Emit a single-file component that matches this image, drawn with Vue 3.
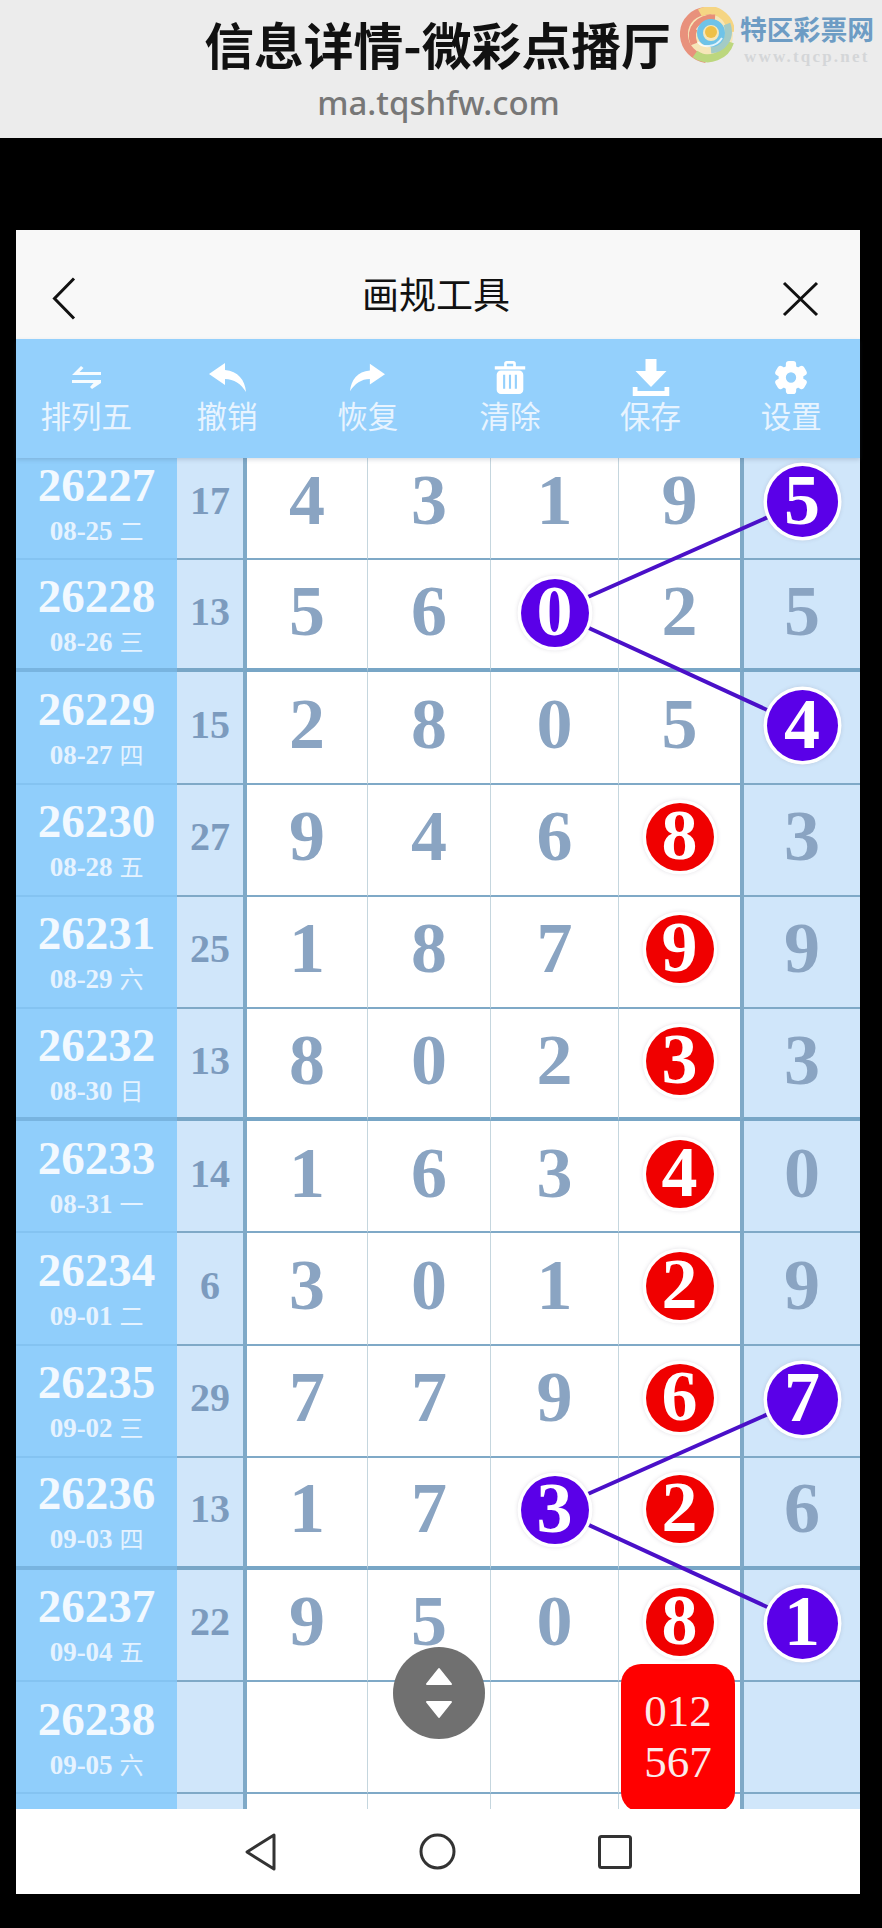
<script setup>
const rows = [
  { id: '26227', date: '08-25', wd: '二', sum: '17', n: [4, 3, 1, 9, 5], b: { 4: 'p' } },
  { id: '26228', date: '08-26', wd: '三', sum: '13', n: [5, 6, 0, 2, 5], b: { 2: 'p' }, thick: true },
  { id: '26229', date: '08-27', wd: '四', sum: '15', n: [2, 8, 0, 5, 4], b: { 4: 'p' } },
  { id: '26230', date: '08-28', wd: '五', sum: '27', n: [9, 4, 6, 8, 3], b: { 3: 'r' } },
  { id: '26231', date: '08-29', wd: '六', sum: '25', n: [1, 8, 7, 9, 9], b: { 3: 'r' } },
  { id: '26232', date: '08-30', wd: '日', sum: '13', n: [8, 0, 2, 3, 3], b: { 3: 'r' }, thick: true },
  { id: '26233', date: '08-31', wd: '一', sum: '14', n: [1, 6, 3, 4, 0], b: { 3: 'r' } },
  { id: '26234', date: '09-01', wd: '二', sum: '6', n: [3, 0, 1, 2, 9], b: { 3: 'r' } },
  { id: '26235', date: '09-02', wd: '三', sum: '29', n: [7, 7, 9, 6, 7], b: { 3: 'r', 4: 'p' } },
  { id: '26236', date: '09-03', wd: '四', sum: '13', n: [1, 7, 3, 2, 6], b: { 2: 'p', 3: 'r' }, thick: true },
  { id: '26237', date: '09-04', wd: '五', sum: '22', n: [9, 5, 0, 8, 1], b: { 3: 'r', 4: 'p' } },
  { id: '26238', date: '09-05', wd: '六', sum: '', n: ['', '', '', '', ''], b: {}, box: true },
  { id: '', date: '', wd: '', sum: '', n: ['', '', '', '', ''], b: {} }
]
const links = [
  [554, 613, 802, 503],
  [554, 613, 802, 727],
  [554, 1510, 802, 1400],
  [554, 1510, 802, 1624]
]
const tools = ['排列五', '撤销', '恢复', '清除', '保存', '设置']
const teeth = [0, 60, 120, 180, 240, 300]
</script>

<template>
  <div class="page">
    <div class="topbar">
      <div class="title">信息详情-微彩点播厅</div>
      <div class="url">ma.tqshfw.com</div>
      <div class="mark">
        <svg class="swirl" width="54" height="56" viewBox="4 7 54 56">
          <circle cx="32" cy="35" r="25" fill="#f6e6b8" />
          <path d="M36 11C18 9 7 22 8 36C9 48 18 57 30 59" fill="none" stroke="#e8917c" stroke-width="8" />
          <path d="M19 54C33 64 50 55 54 42" fill="none" stroke="#bcd77e" stroke-width="8" />
          <path d="M24 13C38 5 54 16 55 32" fill="none" stroke="#f5d583" stroke-width="8" />
          <path d="M51 24C56 38 47 49 35 50" fill="none" stroke="#a3cbc6" stroke-width="7" />
          <path d="M18 44C12 28 24 17 39 18" fill="none" stroke="#e88f78" stroke-width="7" />
          <path d="M21 30C26 22 36 20 43 24" fill="none" stroke="#f7f0dc" stroke-width="2.500" />
          <circle cx="35" cy="33" r="11" fill="none" stroke="#6fc3e8" stroke-width="6" />
          <circle cx="35" cy="32" r="6" fill="#eec048" />
          <path d="M22 42C26 48 40 48 46 38" fill="none" stroke="#fff" stroke-width="2" opacity=".8" />
        </svg>
        <div class="mark-text">
          <div class="mark-cn">特区彩票网</div>
          <div class="mark-en">www.tqcp.net</div>
        </div>
      </div>
    </div>

    <div class="black-gap"></div>

    <div class="panel">
      <div class="header">
        <svg class="back" width="24" height="43" viewBox="0 0 24 43">
          <polyline points="22,1.5 2.500,21.5 22,41.5" fill="none" stroke="#111" stroke-width="3" />
        </svg>
        <div class="header-title">画规工具</div>
        <svg class="close" width="37" height="36" viewBox="0 0 37 36">
          <path d="M2 2L35 34M35 2L2 34" fill="none" stroke="#111" stroke-width="3" />
        </svg>
      </div>

      <div class="toolbar">
        <div v-for="(t, i) in tools" :key="t" class="tool">
          <div class="tool-icon">
            <svg v-if="i === 0" width="29" height="23" viewBox="0 0 29 23">
              <path d="M0 9L9 0L11.500 2L7.500 6H29V9Z M0 14H29V17L20 23L18 21L21.500 17H0Z" fill="#fff" opacity=".92" />
            </svg>
            <svg v-else-if="i === 1" width="37" height="29" viewBox="0 0 37 29">
              <path d="M0 11L16 0V7C29 8 36 17 37 29C32 21 25 16 16 16V22Z" fill="#fff" />
            </svg>
            <svg v-else-if="i === 2" width="35" height="29" viewBox="0 0 37 29">
              <path transform="translate(37 0) scale(-1 1)" d="M0 11L16 0V7C29 8 36 17 37 29C32 21 25 16 16 16V22Z" fill="#fff" />
            </svg>
            <svg v-else-if="i === 3" width="31" height="33" viewBox="0 0 29 31">
              <path d="M0 5H9V2.500A2.500 2.500 0 0 1 11.500 0H17.500A2.500 2.500 0 0 1 20 2.500V5H29V8H0ZM11.500 5H17.500V2.500H11.500Z" fill="#fff" fill-rule="evenodd" />
              <rect x="2" y="9" width="25" height="22" rx="4" fill="#fff" />
              <path d="M9 13V26M14.500 13V26M20 13V26" stroke="#94d0fc" stroke-width="2" />
            </svg>
            <svg v-else-if="i === 4" width="37" height="37" viewBox="0 0 37 37">
              <path d="M13 0H24V12H34L18.500 28L3 12H13Z M0 28H5V32H32V28H37V37H0Z" fill="#fff" />
            </svg>
            <svg v-else width="33" height="33" viewBox="0 0 32 32">
              <rect v-for="a in teeth" :key="a" x="11" y="0" width="10" height="9" rx="3" fill="#fff" :transform="`rotate(${a} 16 16)`" />
              <circle cx="16" cy="16" r="8.500" fill="none" stroke="#fff" stroke-width="7" />
            </svg>
          </div>
          <div class="tool-label">{{ t }}</div>
        </div>
      </div>

      <div class="table">
        <div class="rows">
          <div v-for="r in rows" :key="r.id + r.date" class="row" :class="{ thick: r.thick }">
            <div class="c-id">
              <div class="id">{{ r.id }}</div>
              <div class="date">{{ r.date }} <span class="wd">{{ r.wd }}</span></div>
            </div>
            <div class="c-sum">{{ r.sum }}</div>
            <div
              v-for="(v, i) in r.n"
              :key="i"
              class="cell"
              :class="{ first: i === 0, last: i === 4 }"
            >
              <span v-if="r.b[i]" class="ball" :class="[r.b[i], { mid: i === 2 }]"><span class="ball-n">{{ v }}</span></span>
              <span v-else class="num">{{ v }}</span>
              <div v-if="r.box && i === 3" class="kill">012<br />567</div>
            </div>
          </div>
        </div>

        <svg class="links" width="844" height="1351" viewBox="16 459 844 1351">
          <line
            v-for="(l, i) in links"
            :key="i"
            :x1="l[0]"
            :y1="l[1]"
            :x2="l[2]"
            :y2="l[3]"
            stroke="#4a10c8"
            stroke-width="4"
          />
        </svg>

        <div class="float">
          <svg width="28" height="52" viewBox="0 0 28 52">
            <path d="M14 2L26 17H2Z" fill="#fff" stroke="#fff" stroke-width="2" stroke-linejoin="round" />
            <path d="M14 50L26 35H2Z" fill="#fff" stroke="#fff" stroke-width="2" stroke-linejoin="round" />
          </svg>
        </div>
      </div>

      <div class="nav">
        <svg width="33" height="38" viewBox="0 0 33 38">
          <path d="M30 2V36L3 19Z" fill="none" stroke="#333" stroke-width="3" stroke-linejoin="round" />
        </svg>
        <svg width="37" height="37" viewBox="0 0 37 37">
          <circle cx="18.500" cy="18.500" r="16.500" fill="none" stroke="#333" stroke-width="3" />
        </svg>
        <svg width="34" height="34" viewBox="0 0 34 34">
          <rect x="1.500" y="1.500" width="31" height="31" rx="2" fill="none" stroke="#333" stroke-width="3" />
        </svg>
      </div>
    </div>
  </div>
</template>

<style>
html, body { background: #000; margin: 0; }
</style>

<style scoped>
.page {
  width: 882px;
  height: 1928px;
  background: #000;
  font-family: "Noto Sans CJK SC", sans-serif;
  overflow: hidden;
}
.topbar {
  position: relative;
  height: 138px;
  background: #ececec;
  display: flex;
  flex-direction: column;
  align-items: center;
}
.title {
  margin-top: 12px;
  margin-left: -7px;
  font-size: 49.800px;
  line-height: 62px;
  font-weight: 700;
  color: #111;
  white-space: nowrap;
}
.url {
  margin-top: 7px;
  margin-left: -5px;
  font-family: "Noto Sans", sans-serif;
  font-size: 33px;
  line-height: 44px;
  font-weight: 500;
  color: #777;
}
.mark {
  position: absolute;
  left: 680px;
  top: 7px;
  display: flex;
  gap: 6px;
}
.swirl { flex: none; }
.mark-cn {
  font-size: 26.800px;
  line-height: 32px;
  font-weight: 700;
  color: #6d9cc4;
  white-space: nowrap;
  margin-top: 6px;
}
.mark-en {
  font-family: "Liberation Serif", serif;
  font-weight: 700;
  font-size: 17px;
  line-height: 20px;
  letter-spacing: 2.200px;
  color: #d4d6d8;
  white-space: nowrap;
  margin-top: 2px;
  padding-left: 4px;
}
.black-gap { height: 92px; }
.panel {
  width: 844px;
  margin-left: 16px;
  display: flex;
  flex-direction: column;
}
.header {
  height: 109px;
  background: #f8f8f8;
  display: flex;
  align-items: center;
  justify-content: space-between;
  padding: 28px 41px 0 36px;
  box-sizing: border-box;
}
.header-title {
  font-size: 37px;
  line-height: 50px;
  font-weight: 400;
  color: #111;
  margin-top: -12px;
  margin-left: 14px;
}
.toolbar {
  height: 119px;
  background: #94d0fc;
  display: grid;
  grid-template-columns: repeat(6, 140.700px);
  padding-top: 18px;
  box-sizing: border-box;
  position: relative;
  z-index: 3;
  box-shadow: 0 2px 4px rgba(60, 80, 100, 0.18);
}
.tool {
  display: flex;
  flex-direction: column;
  align-items: center;
}
.tool:nth-child(n + 4) { transform: translateX(1.500px); }
.tool-icon {
  height: 40px;
  display: flex;
  align-items: center;
  justify-content: center;
}
.tool-label {
  font-size: 30.500px;
  line-height: 36px;
  color: #e8f4ff;
  white-space: nowrap;
}
.table {
  position: relative;
  height: 1351px;
  overflow: hidden;
  background: #fff;
}
.rows { margin-top: -10px; }
.row {
  height: 112.200px;
  display: grid;
  grid-template-columns: 161px 66px 124px 123px 128px 122px 120px;
  font-family: "Liberation Serif", "Noto Sans CJK SC", serif;
  font-weight: 700;
}
.row > * {
  box-sizing: border-box;
  border-bottom: 2px solid #7fa9c7;
}
.row.thick > * { border-bottom: 4px solid #78a6c6; }
.c-id {
  background: #90cefb;
  display: flex;
  flex-direction: column;
  align-items: center;
  justify-content: center;
  color: #f2f9ff;
  border-bottom-color: #84c3f1 !important;
}
.row.thick .c-id { border-bottom-color: #78b4e0 !important; }
.id {
  font-size: 47px;
  line-height: 50px;
  height: 50px;
  margin-top: -2px;
}
.date {
  font-size: 27px;
  line-height: 30px;
  height: 30px;
  margin-top: 5px;
  color: #e6f3ff;
}
.wd {
  font-family: "Noto Sans CJK SC", sans-serif;
  font-weight: 400;
  font-size: 24px;
}
.c-sum {
  background: #d0e6fa;
  display: flex;
  align-items: center;
  justify-content: center;
  font-size: 40px;
  color: #7c9bbe;
  padding-bottom: 6px;
}
.cell {
  position: relative;
  display: flex;
  align-items: center;
  justify-content: center;
  border-left: 1.500px solid #c5d6de;
  background: #fff;
}
.cell.first { border-left: 4px solid #7fa9c7; }
.cell.last {
  border-left: 4px solid #7fa9c7;
  background: #d0e6fa;
}
.num {
  font-size: 72px;
  line-height: 72px;
  color: #8aa4c2;
  margin-top: -7px;
}
.ball {
  position: relative;
  z-index: 2;
  width: 68px;
  height: 68px;
  margin-top: -3px;
  border-radius: 50%;
  display: flex;
  align-items: center;
  justify-content: center;
  color: #fff;
  box-shadow: 0 0 0 3.500px #fff, 0 0 4px 3px rgba(90, 80, 110, 0.22);
}
.ball.r { background: #f00000; margin-top: -5px; }
.ball.p { background: #5a00e8; width: 71px; height: 71px; }
.ball.p.mid { width: 68px; height: 68px; }
.ball-n {
  font-size: 72px;
  line-height: 70px;
  margin-top: -4px;
}
.kill {
  position: absolute;
  z-index: 2;
  left: 2px;
  top: -18px;
  width: 114px;
  height: 148px;
  padding-top: 22px;
  box-sizing: border-box;
  background: #ff0000;
  border-radius: 20px;
  color: #fbeaea;
  font-weight: 400;
  font-size: 45px;
  line-height: 51px;
  text-align: center;
}
.links {
  position: absolute;
  left: 0;
  top: 0;
  z-index: 1;
}
.float {
  position: absolute;
  z-index: 4;
  left: 377px;
  top: 1189px;
  width: 92px;
  height: 92px;
  border-radius: 50%;
  background: #707070;
  display: flex;
  align-items: center;
  justify-content: center;
}
.nav {
  height: 85px;
  background: #fff;
  display: flex;
  align-items: center;
  justify-content: center;
  gap: 142px;
}
</style>
